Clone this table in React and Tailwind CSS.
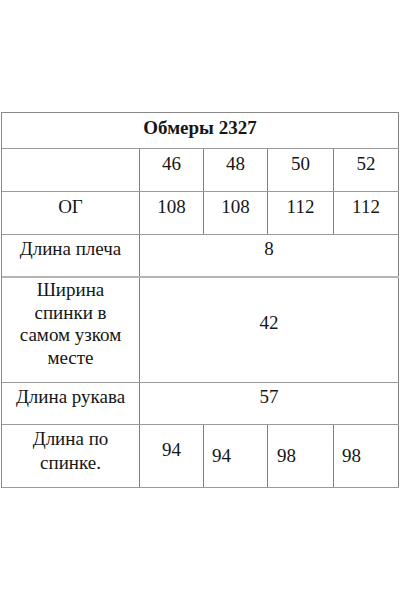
import React from "react";

const font = { fontFamily: '"Liberation Serif", "DejaVu Serif", serif' };

function Row({ h, children, cls = "" }) {
  return (
    <div
      className={`grid grid-cols-[138px_64px_64px_66px_65px] border-b border-[#9a9a9a] ${cls}`}
      style={{ height: h }}
    >
      {children}
    </div>
  );
}

export default function App() {
  const v = "border-r border-[#808080]";
  return (
    <div className="w-[400px] h-[600px] bg-white text-[#161616] pt-[112px] pl-[1px]" style={font}>
      <div className="w-[398px] border-t border-l border-[#8a8a8a] text-[19px] leading-[23px]">
        <Row h={36}>
          <div className={`col-span-5 ${v} text-center font-bold pt-[3px]`}>Обмеры 2327</div>
        </Row>
        <Row h={43}>
          <div className={`${v}`}></div>
          <div className={`${v} text-center pt-[3px]`}>46</div>
          <div className={`${v} text-center pt-[3px]`}>48</div>
          <div className={`${v} text-center pt-[3px]`}>50</div>
          <div className={`${v} text-center pt-[3px]`}>52</div>
        </Row>
        <Row h={43}>
          <div className={`${v} text-center pt-[3px]`}>ОГ</div>
          <div className={`${v} text-center pt-[3px]`}>108</div>
          <div className={`${v} text-center pt-[3px]`}>108</div>
          <div className={`${v} text-center pt-[3px]`}>112</div>
          <div className={`${v} text-center pt-[3px]`}>112</div>
        </Row>
        <Row h={43} cls="border-b-2 border-b-[#b4b4b4]">
          <div className={`${v} text-center pt-[2px]`}>Длина плеча</div>
          <div className={`${v} col-span-4 text-center pt-[2px]`}>8</div>
        </Row>
        <Row h={105}>
          <div className={`${v} text-center pt-[1px] leading-[22.5px]`}>
            Ширина
            <br />
            спинки в
            <br />
            самом узком
            <br />
            месте
          </div>
          <div className={`${v} col-span-4 text-center pt-[33px]`}>42</div>
        </Row>
        <Row h={42}>
          <div className={`${v} text-center pt-[2px]`}>Длина рукава</div>
          <div className={`${v} col-span-4 text-center pt-[2px]`}>57</div>
        </Row>
        <Row h={63}>
          <div className={`${v} text-center pt-[2px] leading-[24px]`}>
            Длина по
            <br />
            спинке.
          </div>
          <div className={`${v} text-center pt-[13px]`}>94</div>
          <div className={`${v} pl-[8px] pt-[19px]`}>94</div>
          <div className={`${v} pl-[9px] pt-[19px]`}>98</div>
          <div className={`${v} pl-[8px] pt-[19px]`}>98</div>
        </Row>
      </div>
    </div>
  );
}
